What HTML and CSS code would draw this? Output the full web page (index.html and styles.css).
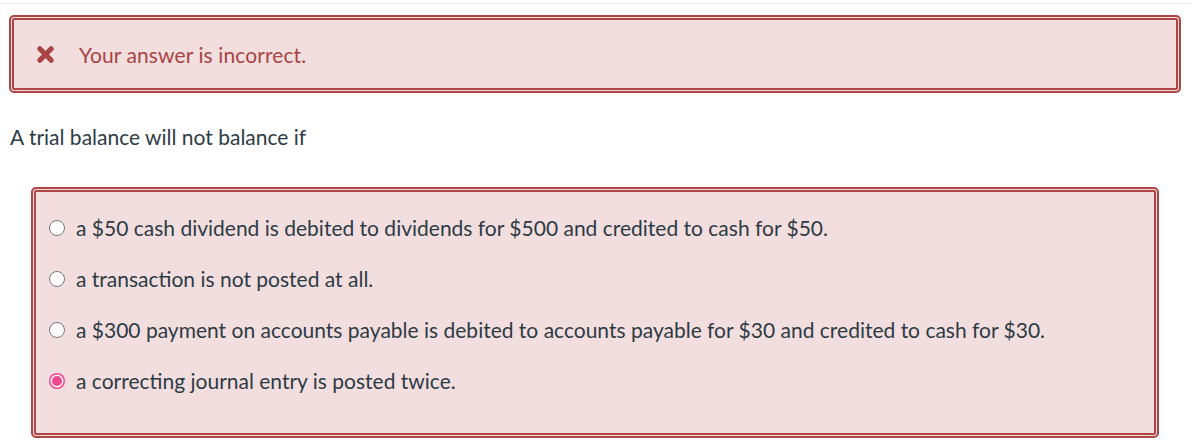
FILE: index.html
```html
<!DOCTYPE html>
<html>
<head>
<meta charset="utf-8">
<link rel="stylesheet" href="styles.css">
</head>
<body>
<div class="topline"></div>
<div class="alert">
  <svg class="x-icon" viewBox="0 0 20 20" width="19" height="19"><path d="M4 4 L16 16 M16 4 L4 16" stroke="#a94442" stroke-width="5.4" stroke-linecap="round"/></svg>
  <span class="alert-text">Your answer is incorrect.</span>
</div>
<p class="question">A trial balance will not balance if</p>
<div class="answers">
  <div class="option"><span class="radio"></span><span class="label">a $50 cash dividend is debited to dividends for $500 and credited to cash for $50.</span></div>
  <div class="option"><span class="radio"></span><span class="label">a transaction is not posted at all.</span></div>
  <div class="option"><span class="radio"></span><span class="label">a $300 payment on accounts payable is debited to accounts payable for $30 and credited to cash for $30.</span></div>
  <div class="option"><span class="radio checked"></span><span class="label">a correcting journal entry is posted twice.</span></div>
</div>
</body>
</html>
```
FILE: styles.css
```css
body {
  margin: 0;
  font-family: Lato, "Noto Sans", sans-serif;
  background: #ffffff;
  color: #2d3b45;
}
.topline {
  height: 3px;
  border-bottom: 1px solid #e8e8e8;
}
.alert {
  margin: 11px 11px 0 9px;
  height: 68px;
  border: 5px double #b04545;
  border-radius: 5px;
  background: #f2dede;
  display: flex;
  align-items: center;
  padding-left: 22px;
}
.x-icon {
  flex: none;
  margin-right: 24px;
}
.alert-text {
  color: #a94442;
  font-size: 21px;
  letter-spacing: 0.1px;
}
.question {
  margin: 31px 0 0 10px;
  font-size: 21px;
  line-height: 26px;
}
.answers {
  margin: 37px 33px 0 31px;
  border: 5px double #b04545;
  border-radius: 5px;
  background: #f2dede;
  padding: 10px 0 27px 14px;
}
.option {
  display: flex;
  align-items: center;
  height: 51px;
}
.radio {
  flex: none;
  box-sizing: border-box;
  width: 16px;
  height: 16px;
  border-radius: 50%;
  border: 1.5px solid #777;
  background: #fff;
  margin-right: 11px;
  margin-left: -1px;
}
.radio.checked {
  border: none;
  background: #f0468c;
  box-shadow: inset 0 0 0 1.5px #f0468c, inset 0 0 0 3px #fff;
}
.label {
  font-size: 21px;
}
```
